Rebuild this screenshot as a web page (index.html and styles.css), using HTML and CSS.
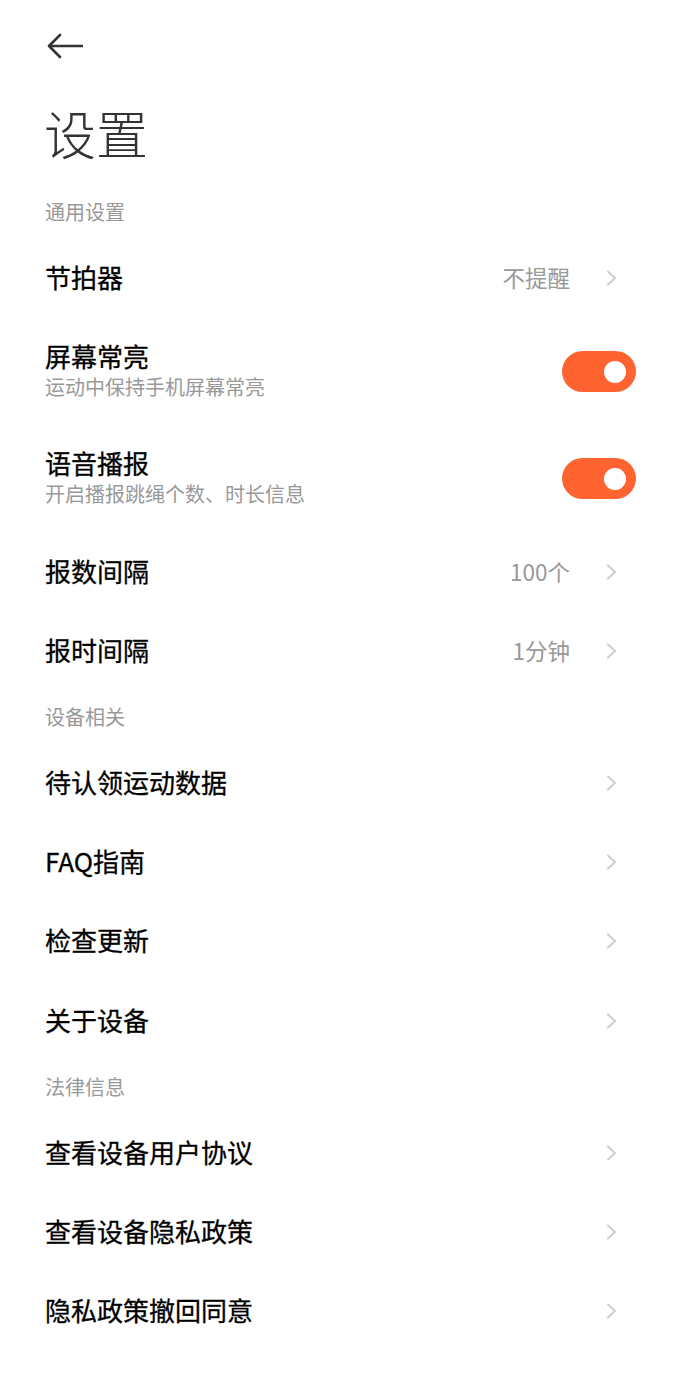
FILE: index.html
```html
<!DOCTYPE html>
<html lang="zh-CN">
<head>
<meta charset="utf-8">
<title>设置</title>
<link rel="stylesheet" href="styles.css">
</head>
<body>
<div class="page">
  <div class="topbar">
    <svg class="back" width="36" height="26" viewBox="0 0 36 26" aria-hidden="true">
      <path d="M35 13H2M13 2L2 13L13 24" fill="none" stroke="#333" stroke-width="2.6" stroke-linecap="round" stroke-linejoin="round"/>
    </svg>
  </div>
  <h1 class="title">设置</h1>

  <div class="section first">通用设置</div>
  <div class="row">
    <div class="label">节拍器</div>
    <div class="value">不提醒</div>
    <svg class="chev" width="12" height="16" viewBox="0 0 12 16"><path d="M2 1.5L9 8L2 14.5" fill="none" stroke="#cfcfcf" stroke-width="2.2" stroke-linecap="round" stroke-linejoin="round"/></svg>
  </div>
  <div class="row double">
    <div class="texts">
      <div class="label">屏幕常亮</div>
      <div class="sub">运动中保持手机屏幕常亮</div>
    </div>
    <div class="switch"><span class="knob"></span></div>
  </div>
  <div class="row double">
    <div class="texts">
      <div class="label">语音播报</div>
      <div class="sub">开启播报跳绳个数、时长信息</div>
    </div>
    <div class="switch"><span class="knob"></span></div>
  </div>
  <div class="row">
    <div class="label">报数间隔</div>
    <div class="value">100个</div>
    <svg class="chev" width="12" height="16" viewBox="0 0 12 16"><path d="M2 1.5L9 8L2 14.5" fill="none" stroke="#cfcfcf" stroke-width="2.2" stroke-linecap="round" stroke-linejoin="round"/></svg>
  </div>
  <div class="row">
    <div class="label">报时间隔</div>
    <div class="value">1分钟</div>
    <svg class="chev" width="12" height="16" viewBox="0 0 12 16"><path d="M2 1.5L9 8L2 14.5" fill="none" stroke="#cfcfcf" stroke-width="2.2" stroke-linecap="round" stroke-linejoin="round"/></svg>
  </div>

  <div class="section">设备相关</div>
  <div class="row">
    <div class="label">待认领运动数据</div>
    <svg class="chev" width="12" height="16" viewBox="0 0 12 16"><path d="M2 1.5L9 8L2 14.5" fill="none" stroke="#cfcfcf" stroke-width="2.2" stroke-linecap="round" stroke-linejoin="round"/></svg>
  </div>
  <div class="row">
    <div class="label">FAQ指南</div>
    <svg class="chev" width="12" height="16" viewBox="0 0 12 16"><path d="M2 1.5L9 8L2 14.5" fill="none" stroke="#cfcfcf" stroke-width="2.2" stroke-linecap="round" stroke-linejoin="round"/></svg>
  </div>
  <div class="row">
    <div class="label">检查更新</div>
    <svg class="chev" width="12" height="16" viewBox="0 0 12 16"><path d="M2 1.5L9 8L2 14.5" fill="none" stroke="#cfcfcf" stroke-width="2.2" stroke-linecap="round" stroke-linejoin="round"/></svg>
  </div>
  <div class="row">
    <div class="label">关于设备</div>
    <svg class="chev" width="12" height="16" viewBox="0 0 12 16"><path d="M2 1.5L9 8L2 14.5" fill="none" stroke="#cfcfcf" stroke-width="2.2" stroke-linecap="round" stroke-linejoin="round"/></svg>
  </div>

  <div class="section">法律信息</div>
  <div class="row">
    <div class="label">查看设备用户协议</div>
    <svg class="chev" width="12" height="16" viewBox="0 0 12 16"><path d="M2 1.5L9 8L2 14.5" fill="none" stroke="#cfcfcf" stroke-width="2.2" stroke-linecap="round" stroke-linejoin="round"/></svg>
  </div>
  <div class="row">
    <div class="label">查看设备隐私政策</div>
    <svg class="chev" width="12" height="16" viewBox="0 0 12 16"><path d="M2 1.5L9 8L2 14.5" fill="none" stroke="#cfcfcf" stroke-width="2.2" stroke-linecap="round" stroke-linejoin="round"/></svg>
  </div>
  <div class="row">
    <div class="label">隐私政策撤回同意</div>
    <svg class="chev" width="12" height="16" viewBox="0 0 12 16"><path d="M2 1.5L9 8L2 14.5" fill="none" stroke="#cfcfcf" stroke-width="2.2" stroke-linecap="round" stroke-linejoin="round"/></svg>
  </div>
</div>
</body>
</html>
```

FILE: styles.css
```css
* { box-sizing: border-box; }
html, body {
  margin: 0;
  padding: 0;
  background: #ffffff;
}
body {
  font-family: "Noto Sans CJK SC", "Noto Sans", sans-serif;
  color: #111;
}
.page {
  width: 680px;
  padding: 0 44px 0 45px;
}
.topbar {
  height: 88px;
  display: flex;
  align-items: center;
}
.back {
  display: block;
  margin-left: 2px;
  margin-top: 4px;
}
.title {
  margin: 0 0 0 -1px;
  height: 92px;
  line-height: 90px;
  font-size: 52px;
  font-weight: 300;
  color: #333;
}
.section {
  height: 52.7px;
  line-height: 51px;
  font-size: 20px;
  color: #999;
}
.section.first {
  margin-top: 6px;
}
.row {
  height: 79.3px;
  display: flex;
  align-items: center;
  padding-bottom: 3px;
}
.row.double {
  height: 107.2px;
}
.texts {
  flex: 1;
  display: flex;
  flex-direction: column;
}
.label {
  flex: 1;
  font-size: 26px;
  font-weight: 400;
  line-height: 34px;
  color: #000;
  -webkit-text-stroke: 0.3px #000;
}
.texts .label {
  flex: none;
}
.sub {
  font-size: 20px;
  line-height: 28px;
  color: #999;
}
.value {
  font-size: 22.5px;
  color: #999;
  margin-right: 36px;
}
.row.double .switch {
  margin-top: 3px;
}
.chev {
  display: block;
  margin-right: 18px;
  margin-top: 2px;
  flex: none;
}
.switch {
  width: 74px;
  height: 41px;
  border-radius: 21px;
  background: #ff6430;
  display: flex;
  align-items: center;
  justify-content: flex-end;
  padding-right: 10px;
  flex: none;
}
.knob {
  width: 22px;
  height: 22px;
  border-radius: 50%;
  background: #fff;
  display: block;
}
```
